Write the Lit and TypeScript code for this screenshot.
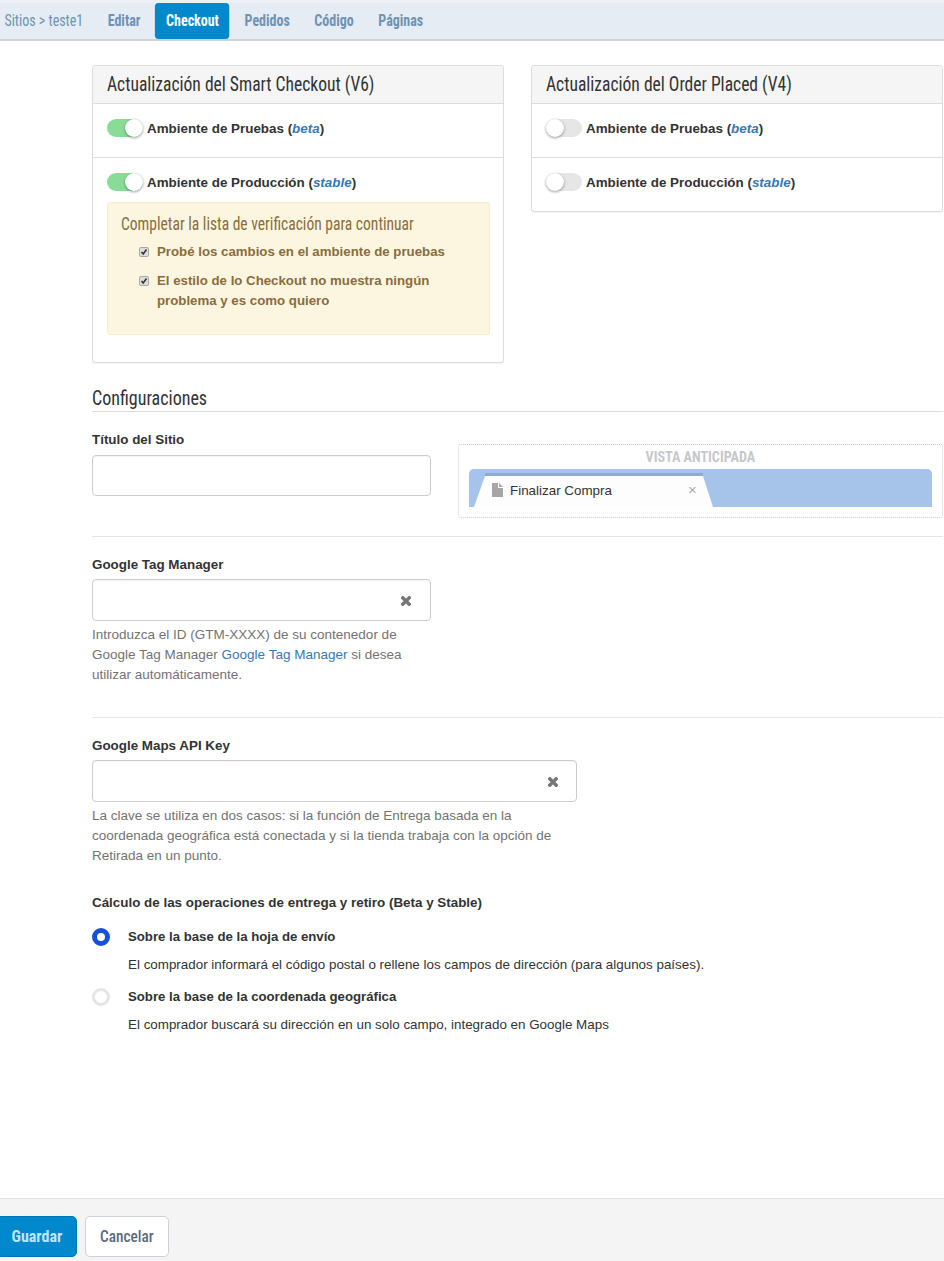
import { LitElement, html, css } from "lit";
import { customElement } from "lit/decorators.js";

const cond = css`"Roboto Condensed", Roboto, sans-serif`;

@customElement("app-root")
export class AppRoot extends LitElement {
  static styles = css`
    :host { display: block; width: 944px; height: 1261px; overflow: hidden; background: #fff; color: #333;
      font: 13.4px/20px "Liberation Sans", Arial, sans-serif; }
    * { box-sizing: border-box; }
    .page { display: flex; flex-direction: column; height: 1261px; }
    .n { display: inline-block; transform: scaleX(var(--sx, .877)); transform-origin: left center; white-space: nowrap; }
    nav { height: 41px; flex: none; overflow: hidden; background: #e5ecf3; border-bottom: 2px solid #ccd2d8; box-shadow: inset 0 3px 0 #edf1f6; }
    .navin { width: 1079px; display: flex; align-items: flex-start; padding: 3px 0 0 5px; transform: scaleX(.875); transform-origin: left top;
      font: 700 16px/36px ${cond}; color: #6f93b5; }
    .navin a { display: block; height: 36px; margin-right: 28px; white-space: nowrap; }
    .navin a.on { background: #0088cc; color: #fff; border-radius: 4px; width: 85px; text-align: center; margin: 0 17px 0 -11px; }
    .navin a.crumb { font-weight: 400; }
    main { flex: 1; padding: 24px 1px 0 92px; }
    .cards { display: flex; gap: 27px; align-items: flex-start; }
    .card { width: 412px; border: 1px solid #ddd; border-radius: 3px; box-shadow: 0 1px 1px rgba(0,0,0,.05); background: #fff; }
    .card.l { height: 298px; }
    .card h3 { margin: 0; height: 38px; padding: 0 14px; background: #f5f5f5; border-bottom: 1px solid #ddd;
      font: 400 20px/37px ${cond}; color: #333; border-radius: 3px 3px 0 0; }
    .row { height: 54px; padding: 14px 14px 0; display: flex; gap: 4px; align-items: flex-start; font-weight: 700; border-bottom: 1px solid #ddd; }
    .row.last { border-bottom: 0; height: 53px; }
    .row.short { height: 44px; }
    .row span { display: block; line-height: 20px; padding-top: 1px; }
    .row i { color: #337ab7; }
    .toggle { flex: none; position: relative; width: 36px; height: 18px; border-radius: 9px; background: #e6e6e6; margin-top: 1px; }
    .toggle.on { background: #89dc95; }
    .toggle::after { content: ""; position: absolute; top: 0; left: 0; width: 18px; height: 18px; border-radius: 50%; background: #fff;
      box-shadow: 0 1px 3px rgba(0,0,0,.4); }
    .toggle.on::after { left: 18px; }
    .alert { margin: 0 13px 0 14px; height: 133px; background: #fcf6e1; border: 1px solid #faebcc; border-radius: 3px; padding: 10px 13px; color: #8a6d3b; font-size: 13.25px; }
    .alert h4 { margin: 0 0 6px; font: 400 18px/22px ${cond}; color: #8a6d3b; --sx: .864; }
    .check { display: flex; gap: 8px; padding-left: 18px; font-weight: 700; margin-top: 9px; }
    .check.first { margin-top: 0; padding-top: 1px; }
    .box { flex: none; width: 10px; height: 10px; margin-top: 5px; border-radius: 2px; background: #ddd; border: 1px solid #aaa; display: flex; align-items: center; justify-content: center; }
    .box svg { display: block; }
    .section { margin: 22px 0 0; height: 27px; border-bottom: 1px solid #ddd; font: 400 21px/26px ${cond}; color: #333; --sx: .858; }
    label, .lab { display: block; font-weight: 700; line-height: 20px; color: #333; }
    .top { display: flex; align-items: flex-start; gap: 27px; margin-top: 32px; height: 74px; }
    .top .f { width: 339px; margin-top: -14px; }
    .input { position: relative; display: block; height: 42px; margin-top: 4px; border: 1px solid #ccc; border-radius: 4px; background: #fff; box-shadow: inset 0 1px 1px rgba(0,0,0,.04); }
    .input.t { height: 41px; margin-top: 5px; }
    .x { position: absolute; right: 18px; top: 16px; display: block; }
    .w339 .x { right: 19px; }
    .preview { width: 485px; height: 74px; border: 1px dotted #ccc; border-radius: 3px; padding: 0 10px; }
    .preview .t { text-align: center; font: 700 15px/24px ${cond}; color: #c6c8cb; --sx: .94; }
    .preview .t .n { transform-origin: center center; }
    .strip { position: relative; height: 38px; background: #a6c3ea; border-radius: 5px 5px 0 0; }
    .tab { position: absolute; left: 5px; top: 4px; bottom: 0; width: 240px; }
    .shape { position: absolute; left: 0; top: 0; }
    .file { position: absolute; left: 18px; top: 10px; }
    .tabtext { position: absolute; left: 36px; top: 8px; font: 13.4px/20px "Liberation Sans", sans-serif; color: #333; }
    .close { position: absolute; left: 214px; top: 7px; color: #aaa; font: 15px/20px "Liberation Sans", sans-serif; }
    hr { margin: 18px 0 0; border: 0; border-top: 1px solid #e5e5e5; height: 1px; }
    hr.mid { margin-top: 32px; }
    .block { margin-top: 18px; }
    .w339 { width: 339px; }
    .w485 { width: 485px; }
    .help { margin-top: 4px; color: #737373; font-size: 13.5px; }
    .help.narrow { width: 470px; }
    .help a { color: #337ab7; }
    .calc { margin-top: 27px; }
    .opt { padding-left: 36px; position: relative; margin-top: 12px; }
    .opt.first { margin-top: 14px; }
    .opt b { display: block; line-height: 20px; font-size: 13.2px; }
    .opt p { margin: 8px 0 0; font-size: 13.4px; color: #333; line-height: 20px; white-space: nowrap; }
    .radio { position: absolute; left: 0; top: 1px; width: 18px; height: 18px; border-radius: 50%; border: 3px solid #e5e5e5; background: #fff; }
    .radio.on { border: 5px solid #1750d8; }
    footer { flex: none; height: 63px; background: #f4f4f4; border-top: 1px solid #e2e2e2; padding: 17px 0 0; display: flex; gap: 8px; align-items: flex-start; }
    .btn { height: 41px; border-radius: 5px; font: 700 17px/39px ${cond}; text-align: center; }
    .btn .n { transform-origin: center center; }
    .primary { width: 81px; margin-left: -4px; background: #0088cc; color: #bfe6ff; border: 1px solid #0077b3; --sx: .94; }
    .default { width: 84px; background: #fff; border: 1px solid #ccd2d8; color: #5b6b7b; font-weight: 500; --sx: .9; }
  `;

  private x() {
    return html`<svg class="x" width="10" height="10" viewBox="0 0 10 10"><path d="M1.8 1.8 L8.2 8.2 M8.2 1.8 L1.8 8.2" stroke="#777" stroke-width="3.4" stroke-linecap="square"/></svg>`;
  }

  private row(on: boolean, name: string, tag: string, cls = "") {
    return html`<div class="row ${cls}"><div class="toggle ${on ? "on" : ""}"></div><span>${name} (<i>${tag}</i>)</span></div>`;
  }

  private check(text: string, cls = "") {
    return html`<div class="check ${cls}"><span class="box"><svg width="8" height="8" viewBox="0 0 8 8"><path d="M1.5 4 L3.2 6 L6.5 1.5" fill="none" stroke="#333" stroke-width="1.6"/></svg></span><span>${text}</span></div>`;
  }

  render() {
    return html`<div class="page">
      <nav><div class="navin">
        <a class="crumb">Sitios &gt; teste1</a><a>Editar</a><a class="on">Checkout</a><a>Pedidos</a><a>Código</a><a>Páginas</a>
      </div></nav>
      <main>
        <div class="cards">
          <div class="card l">
            <h3><span class="n">Actualización del Smart Checkout (V6)</span></h3>
            ${this.row(true, "Ambiente de Pruebas", "beta")}
            ${this.row(true, "Ambiente de Producción", "stable", "last short")}
            <div class="alert">
              <h4><span class="n">Completar la lista de verificación para continuar</span></h4>
              ${this.check("Probé los cambios en el ambiente de pruebas", "first")}
              ${this.check("El estilo de lo Checkout no muestra ningún problema y es como quiero")}
            </div>
          </div>
          <div class="card">
            <h3><span class="n">Actualización del Order Placed (V4)</span></h3>
            ${this.row(false, "Ambiente de Pruebas", "beta")}
            ${this.row(false, "Ambiente de Producción", "stable", "last")}
          </div>
        </div>
        <div class="section"><span class="n">Configuraciones</span></div>
        <div class="top">
          <div class="f"><label>Título del Sitio</label><span class="input t"></span></div>
          <div class="preview">
            <div class="t"><span class="n">VISTA ANTICIPADA</span></div>
            <div class="strip">
              <div class="tab">
                <svg class="shape" width="240" height="34" viewBox="0 0 240 34"><path d="M0 34 L11 3 H229 L239 34 Z" fill="#fdfdfd"/><rect x="11" y="0" width="218" height="3" fill="#8fa9cf"/></svg>
                <svg class="file" width="11" height="14" viewBox="0 0 11 14"><path d="M0 0 H6 V5 H11 V14 H0 Z M7 0 L11 4 H7 Z" fill="#a6a6a6"/></svg>
                <span class="tabtext">Finalizar Compra</span>
                <span class="close">×</span>
              </div>
            </div>
          </div>
        </div>
        <hr />
        <div class="block w339">
          <label>Google Tag Manager</label>
          <span class="input">${this.x()}</span>
          <div class="help">Introduzca el ID (GTM-XXXX) de su contenedor de Google Tag Manager <a>Google Tag Manager</a> si desea utilizar automáticamente.</div>
        </div>
        <hr class="mid" />
        <div class="block w485">
          <label>Google Maps API Key</label>
          <span class="input">${this.x()}</span>
          <div class="help narrow">La clave se utiliza en dos casos: si la función de Entrega basada en la coordenada geográfica está conectada y si la tienda trabaja con la opción de Retirada en un punto.</div>
        </div>
        <div class="calc">
          <div class="lab">Cálculo de las operaciones de entrega y retiro (Beta y Stable)</div>
          <div class="opt first"><span class="radio on"></span><b>Sobre la base de la hoja de envío</b><p>El comprador informará el código postal o rellene los campos de dirección (para algunos países).</p></div>
          <div class="opt"><span class="radio"></span><b>Sobre la base de la coordenada geográfica</b><p>El comprador buscará su dirección en un solo campo, integrado en Google Maps</p></div>
        </div>
      </main>
      <footer><div class="btn primary"><span class="n">Guardar</span></div><div class="btn default"><span class="n">Cancelar</span></div></footer>
    </div>`;
  }
}
